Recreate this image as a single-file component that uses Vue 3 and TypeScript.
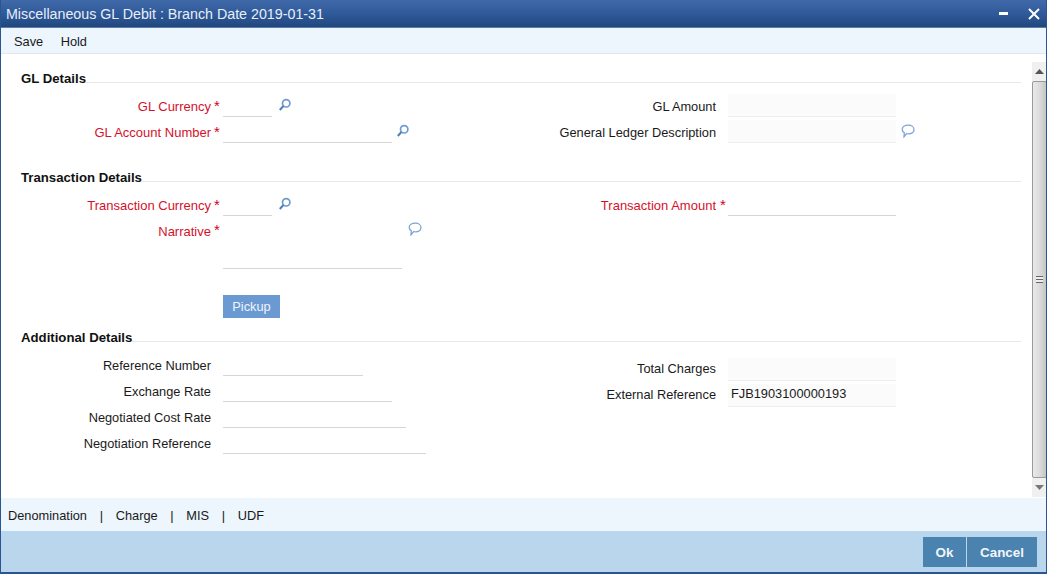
<script setup lang="ts">
interface Field {
  label: string
  required?: boolean
  width: number
  lens?: number
  readonly?: boolean
  value?: string
  note?: number
}

const tabs = ['Denomination', 'Charge', 'MIS', 'UDF']
const glLeft: Field[] = [
  { label: 'GL Currency', required: true, width: 49, lens: 6 },
  { label: 'GL Account Number', required: true, width: 169, lens: 4 },
]
const glRight: Field[] = [
  { label: 'GL Amount', readonly: true, width: 168 },
  { label: 'General Ledger Description', readonly: true, width: 168, note: 5 },
]
const addLeft: Field[] = [
  { label: 'Reference Number', width: 140 },
  { label: 'Exchange Rate', width: 169 },
  { label: 'Negotiated Cost Rate', width: 183 },
  { label: 'Negotiation Reference', width: 203 },
]
const addRight: Field[] = [
  { label: 'Total Charges', readonly: true, width: 168 },
  { label: 'External Reference', readonly: true, width: 168, value: 'FJB1903100000193' },
]
</script>

<template>
  <div class="window">
    <header class="title">
      <span class="title-text">Miscellaneous GL Debit : Branch Date 2019-01-31</span>
      <span class="win-btns">
        <svg width="10" height="10" viewBox="0 0 10 10"><rect x="0" y="3" width="9" height="3" fill="#fff" /></svg>
        <svg width="12" height="12" viewBox="0 0 12 12"><path d="M1 1 11 11M11 1 1 11" stroke="#fff" stroke-width="2" fill="none" /></svg>
      </span>
    </header>
    <nav class="toolbar"><span>Save</span><span>Hold</span></nav>

    <div class="body">
      <main class="content">
        <section class="section">
          <div class="heading"><h2>GL Details</h2><i></i></div>
          <div class="columns">
            <div class="col">
              <div v-for="f in glLeft" :key="f.label" class="row">
                <label class="lab left red">{{ f.label }}</label><b class="star">*</b>
                <span class="input" :style="{ width: f.width + 'px' }"></span>
                <svg class="lens" :style="{ marginLeft: f.lens + 'px' }" width="14" height="14" viewBox="0 0 14 14"><circle cx="8.2" cy="5.3" r="3.7" fill="none" stroke="#6f9ad0" stroke-width="1.7" /><path d="M5.4 8 1.8 12" stroke="#4f7fb8" stroke-width="2" /></svg>
              </div>
            </div>
            <div class="col">
              <div v-for="f in glRight" :key="f.label" class="row">
                <label class="lab right">{{ f.label }}</label>
                <span class="input ro" :style="{ width: f.width + 'px' }"></span>
                <svg v-if="f.note" class="note" :style="{ marginLeft: f.note + 'px' }" width="14" height="14" viewBox="0 0 14 14"><path d="M7.500 1.200C10.500 1.200 13 3 13 5.600 13 8.200 10.500 9.800 7.800 9.800 7 9.800 6.300 9.700 5.700 9.500L3 12.800 3.300 8.700C2 7.900 1.200 6.900 1.200 5.400 1.200 3 4 1.200 7.500 1.200Z" fill="none" stroke="#7fa3d8" stroke-width="1.300" /></svg>
              </div>
            </div>
          </div>
        </section>

        <section class="section tx">
          <div class="heading"><h2>Transaction Details</h2><i></i></div>
          <div class="columns">
            <div class="col">
              <div class="row">
                <label class="lab left red">Transaction Currency</label><b class="star">*</b>
                <span class="input" style="width: 49px"></span>
                <svg class="lens" style="margin-left: 6px" width="14" height="14" viewBox="0 0 14 14"><circle cx="8.2" cy="5.3" r="3.7" fill="none" stroke="#6f9ad0" stroke-width="1.7" /><path d="M5.4 8 1.8 12" stroke="#4f7fb8" stroke-width="2" /></svg>
              </div>
              <div class="row narrative">
                <label class="lab left red">Narrative</label><b class="star">*</b>
                <span class="input area"></span>
                <svg class="note area-note" width="14" height="14" viewBox="0 0 14 14"><path d="M7.500 1.200C10.500 1.200 13 3 13 5.600 13 8.200 10.500 9.800 7.800 9.800 7 9.800 6.300 9.700 5.700 9.500L3 12.800 3.300 8.700C2 7.900 1.200 6.900 1.200 5.400 1.200 3 4 1.200 7.500 1.200Z" fill="none" stroke="#7fa3d8" stroke-width="1.300" /></svg>
              </div>
              <button class="pickup" type="button">Pickup</button>
            </div>
            <div class="col">
              <div class="row">
                <label class="lab right red">Transaction Amount</label><b class="star">*</b>
                <span class="input amount"></span>
              </div>
            </div>
          </div>
        </section>

        <section class="section add">
          <div class="heading"><h2>Additional Details</h2><i></i></div>
          <div class="columns">
            <div class="col">
              <div v-for="f in addLeft" :key="f.label" class="row">
                <label class="lab left">{{ f.label }}</label><b class="star none"></b>
                <span class="input" :style="{ width: f.width + 'px' }"></span>
              </div>
            </div>
            <div class="col add-right">
              <div v-for="f in addRight" :key="f.label" class="row">
                <label class="lab right">{{ f.label }}</label>
                <span class="input ro" :style="{ width: f.width + 'px' }">{{ f.value }}</span>
              </div>
            </div>
          </div>
        </section>
      </main>

      <aside class="scrollbar">
        <span class="arrow"><svg width="9" height="5" viewBox="0 0 9 5"><path d="M4.500 0 9 5H0Z" fill="#555" /></svg></span>
        <span class="thumb"><span class="grip"></span></span>
        <span class="arrow"><svg width="9" height="5" viewBox="0 0 9 5"><path d="M0 0H9L4.500 5Z" fill="#777" /></svg></span>
      </aside>
    </div>

    <div class="tabs">
      <template v-for="(t, i) in tabs" :key="t">
        <span v-if="i" class="sep">|</span><span>{{ t }}</span>
      </template>
    </div>
    <footer class="footer">
      <button class="act ok" type="button">Ok</button>
      <button class="act cancel" type="button">Cancel</button>
    </footer>
  </div>
</template>

<style>
html, body { margin: 0; padding: 0; background: #fff; }
</style>

<style scoped>
.window {
  width: 1047px;
  height: 574px;
  box-sizing: border-box;
  display: flex;
  flex-direction: column;
  border: 1px solid #2a5592;
  border-top: 0;
  border-bottom-width: 2px;
  font: 12.8px/14px "Liberation Sans", Arial, sans-serif;
  color: #1a1a1a;
  overflow: hidden;
}
.title {
  height: 28px;
  flex: none;
  box-sizing: border-box;
  margin: 0 -1px;
  padding: 1px 7px 0 6px;
  display: flex;
  align-items: center;
  justify-content: space-between;
  background: linear-gradient(#4069a8, #2f5a9a 50%, #21477f);
  border-bottom: 1px solid #5f7ea5;
  color: #e8eef7;
  font-size: 14.25px;
}
.win-btns { display: flex; align-items: center; gap: 19px; }
.toolbar {
  height: 26px;
  flex: none;
  box-sizing: border-box;
  padding: 2px 0 0 13px;
  display: flex;
  gap: 17.500px;
  align-items: center;
  background: #edf5fd;
  border-bottom: 1px solid #e3e7ea;
}
.body { flex: 1; display: flex; min-height: 0; }
.content { flex: 1; min-width: 0; padding: 17px 11px 0 20px; }
.scrollbar {
  width: 15px;
  flex: none;
  margin: 8px -1px 1px 0;
  display: flex;
  flex-direction: column;
  background: #eee;
}
.arrow { height: 19px; flex: none; display: flex; align-items: center; justify-content: center; background: #f0f0f0; }
.thumb {
  flex: 1;
  display: flex;
  align-items: center;
  justify-content: center;
  box-sizing: border-box;
  border: 1px solid #9a9a9a;
  border-radius: 2px;
  background: linear-gradient(90deg, #e9e9e9, #dcdcdc 50%, #c6c6c6);
}
.grip {
  width: 7px;
  height: 7px;
  background: repeating-linear-gradient(#666 0 1px, #eee 1px 3px);
}
.heading { display: flex; height: 14px; }
.heading h2 { margin: 0; padding-top: 1px; font-size: 13.2px; line-height: 14px; font-weight: 700; color: #111; white-space: nowrap; }
.heading i { flex: 1; height: 1px; margin-top: 11px; background: #e8e8e8; }
.columns { display: flex; padding-top: 9px; }
.col:first-child { width: 537px; flex: none; }
.col { flex: 1; }
.row { display: flex; height: 23px; margin-bottom: 3px; align-items: center; position: relative; }
.lab { text-align: right; white-space: nowrap; flex: none; margin-top: 3px; }
.left { width: 190px; }
.right { width: 158px; margin-right: 12px; }
.red { color: #d4112c; font-size: 13px; }
.star { width: 12px; flex: none; box-sizing: border-box; padding-left: 3px; color: #d8001c; font-size: 15px; font-weight: 400; line-height: 14px; margin-top: 0; }
.star.none { height: 1px; }
.right.red { margin-right: 0; }
.right.red + .star { width: 12px; padding-left: 4px; }
.input {
  display: block;
  flex: none;
  box-sizing: border-box;
  height: 23px;
  border-bottom: 1px solid #d6d6d6;
  line-height: 19px;
  padding-left: 3px;
}
.ro { background: #fbfbfb; border-bottom-color: #eee; }
.lens { flex: none; margin-top: -2px; }
.note { flex: none; margin-top: -2px; }
.tx { margin-top: 24px; }
.narrative { height: 49px; align-items: flex-start; margin-bottom: 0; }
.narrative .lab { padding-top: 4px; margin-top: 2px; }
.narrative .star { padding-top: 4px; margin-top: 0; }
.area { width: 179px; height: 50px; }
.area-note { position: absolute; left: 387px; top: 3px; margin: 0; }
.amount { width: 168px; }
.pickup {
  display: block;
  margin: 27px 0 0 202px;
  width: 57px;
  height: 23px;
  padding: 0;
  border: 0;
  background: #6b9ad3;
  color: #eef4fb;
  font: 12.8px "Liberation Sans", Arial, sans-serif;
}
.add { margin-top: 12px; }
.add .columns { padding-top: 9px; }
.add-right { padding-top: 5px; }
.add-right .lab { margin-top: -2px; }
.tabs {
  height: 33px;
  flex: none;
  box-sizing: border-box;
  padding: 2px 0 0 7px;
  display: flex;
  align-items: center;
  background: #edf5fd;
}
.sep { margin: 0 12.700px; }
.footer {
  height: 41px;
  flex: none;
  box-sizing: border-box;
  display: flex;
  justify-content: flex-end;
  gap: 1px;
  padding: 6px 9px 5px 0;
  background: #bad6ec;
}
.act {
  height: 30px;
  padding: 0;
  border: 0;
  background: #4a82b0;
  color: #f2f6fa;
  font: 700 13.4px "Liberation Sans", Arial, sans-serif;
}
.ok { width: 43px; }
.cancel { width: 70px; }
</style>
